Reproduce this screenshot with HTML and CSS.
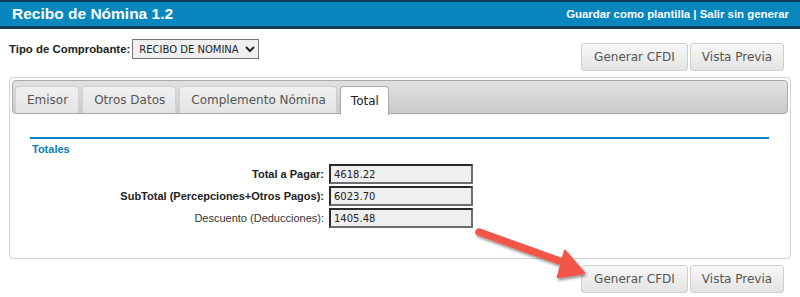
FILE: index.html
```html
<!DOCTYPE html>
<html lang="es">
<head>
	<meta charset="UTF-8" />
	<title>Recibo de Nómina 1.2</title>
	<link rel="stylesheet" href="styles.css">
</head>
<body>
	<div class="header">
		<h1>Recibo de Nómina 1.2</h1>
		<div class="links">
			<a href="#">Guardar como plantilla</a> | <a href="#">Salir sin generar</a>
		</div>
	</div>

	<div class="toolbar">
		<div class="tipo">
			<label for="tipo">Tipo de Comprobante:</label>
			<select id="tipo">
				<option selected>RECIBO DE NOMINA</option>
			</select>
		</div>
		<div class="acciones">
			<button class="generar">Generar CFDI</button>
			<button class="vista">Vista Previa</button>
		</div>
	</div>

	<div class="panel">
		<ul class="tabs">
			<li>Emisor</li>
			<li>Otros Datos</li>
			<li>Complemento Nómina</li>
			<li class="active">Total</li>
		</ul>
		<div class="content">
			<h3 class="section">Totales</h3>
			<div class="totales">
				<label class="strong">Total a Pagar:</label>
				<input type="text" value="4618.22" readonly />
				<label class="strong">SubTotal (Percepciones+Otros Pagos):</label>
				<input type="text" value="6023.70" readonly />
				<label>Descuento (Deducciones):</label>
				<input type="text" value="1405.48" readonly />
			</div>
		</div>
	</div>

	<div class="acciones bottom">
		<button class="generar">Generar CFDI</button>
		<button class="vista">Vista Previa</button>
	</div>

	<!-- flecha de la captura -->
	<svg class="arrow" width="140" height="70" viewBox="0 0 140 70">
		<defs>
			<filter id="sombra" x="-20%" y="-30%" width="140%" height="170%">
				<feDropShadow dx="1" dy="2" stdDeviation="1.6" flood-color="#000" flood-opacity="0.45" />
			</filter>
		</defs>
		<g filter="url(#sombra)" fill="#f1564a" stroke="#f1564a">
			<line x1="11" y1="10" x2="100" y2="42" stroke-width="7.5" stroke-linecap="round" />
			<polygon points="97,29 116,51 90,55" stroke-width="2.5" stroke-linejoin="round" />
		</g>
	</svg>
</body>
</html>
```

FILE: styles.css
```css
body {
	margin: 0;
	font-family: "Liberation Sans", Arial, sans-serif;
	font-size: 11px;
	color: #222;
	position: relative;
}

/* Barra de titulo */
.header {
	display: flex;
	justify-content: space-between;
	align-items: center;
	height: 24px;
	padding: 0 11px 0 12px;
	background-color: #0787bd;
	border-top: 2px solid #0c3c58;
	border-bottom: 3px solid #0c3c58;
}

.header h1 {
	margin: 0;
	color: #fff;
	font-size: 15.5px;
	font-weight: bold;
}

.links {
	color: #fff;
	font-weight: bold;
	font-size: 11.4px;
}

.links a {
	color: #fff;
	text-decoration: none;
}

.toolbar {
	display: flex;
	justify-content: space-between;
	padding: 0 16px 0 9px;
	height: 48px;
}

.tipo {
	display: flex;
	align-items: center;
	gap: 2px;
	margin-top: 10px;
	height: 20px;
	font-weight: bold;
	font-size: 11.4px;
}

.tipo select {
	width: 127px;
	height: 20px;
	font-family: "DejaVu Sans", Verdana, sans-serif;
	font-size: 10px;
	color: #222;
	background: #efefef;
	border: 1px solid #767676;
	border-radius: 0;
	padding: 0 2px;
}

.acciones {
	display: flex;
	gap: 2px;
	margin-top: 14px;
}

.acciones.bottom {
	justify-content: flex-end;
	padding-right: 16px;
	margin-top: 6px;
}

button {
	height: 28px;
	padding: 0;
	font-family: "DejaVu Sans", Verdana, sans-serif;
	font-size: 12px;
	color: #555;
	background: linear-gradient(#f7f7f7, #e3e3e3);
	border: 1px solid #cfcfcf;
	border-radius: 3px;
}

button.generar {
	width: 107px;
}

button.vista {
	width: 94px;
}

/* Panel con pestañas */
.panel {
	margin: 0 9px;
	padding: 2px;
	height: 176px;
	border: 1px solid #d2d2d2;
	border-radius: 4px;
}

.tabs {
	display: flex;
	gap: 3px;
	margin: 0;
	padding: 5px 3px 0 2px;
	height: 27px;
	list-style: none;
	background: linear-gradient(#e2e2e2, #c9c9c9);
	border: 1px solid #aaa;
	border-radius: 4px;
}

.tabs li {
	height: 26px;
	padding: 0 10px 0 11px;
	display: flex;
	align-items: center;
	font-family: "DejaVu Sans", Verdana, sans-serif;
	font-size: 12px;
	color: #555;
	background: linear-gradient(#f0f0f0, #e4e4e4);
	border: 1px solid #d0d0d0;
	border-bottom: none;
	border-radius: 4px 4px 0 0;
}

.tabs li.active {
	height: 28px;
	padding: 0 9px 0 10px;
	color: #212121;
	background: #fff;
	border-color: #aaa;
}

.content {
	padding: 23px 19px 0 18px;
}

.section {
	margin: 0;
	padding: 4px 2px 0;
	height: 20px;
	border-top: 2px solid #0787bd;
	color: #0a7db8;
	font-size: 11px;
	font-weight: bold;
	box-sizing: border-box;
}

/* Tabla de totales */
.totales {
	display: grid;
	grid-template-columns: 294px 144px;
	column-gap: 5px;
	row-gap: 2px;
	margin-top: 7px;
	align-items: center;
}

.totales label {
	text-align: right;
	color: #333;
}

.totales label.strong {
	font-weight: bold;
	color: #222;
}

.totales input {
	height: 20px;
	box-sizing: border-box;
	padding: 1px 3px 0;
	font-family: "DejaVu Sans", Verdana, sans-serif;
	font-size: 10px;
	color: #222;
	background: #efefef;
	border: 2px solid;
	border-color: #2a2a2a #6e6e6e #6e6e6e #2a2a2a;
}

.arrow {
	position: absolute;
	left: 468px;
	top: 222px;
}
```
